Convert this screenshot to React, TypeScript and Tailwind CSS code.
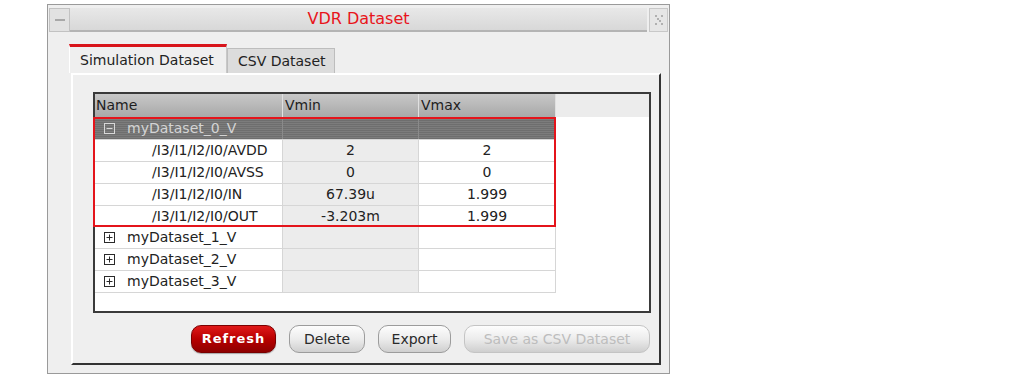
import React from 'react'

const children = [
  { name: '/I3/I1/I2/I0/AVDD', vmin: '2', vmax: '2' },
  { name: '/I3/I1/I2/I0/AVSS', vmin: '0', vmax: '0' },
  { name: '/I3/I1/I2/I0/IN', vmin: '67.39u', vmax: '1.999' },
  { name: '/I3/I1/I2/I0/OUT', vmin: '-3.203m', vmax: '1.999' },
]

const collapsed = ['myDataset_1_V', 'myDataset_2_V', 'myDataset_3_V']

// 展开/折叠小方框
function ToggleBox({ open, light }: { open: boolean; light?: boolean }) {
  const c = light ? '#d8d8d8' : '#2a2a2a'
  return (
    <svg width="11" height="11" viewBox="0 0 11 11" className="shrink-0">
      <rect x="0.5" y="0.5" width="10" height="10" fill="none" stroke={c} />
      <line x1="2.5" y1="5.5" x2="8.5" y2="5.5" stroke={c} />
      {!open && <line x1="5.5" y1="2.5" x2="5.5" y2="8.5" stroke={c} />}
    </svg>
  )
}

function Btn({ label, w, kind }: { label: string; w: string; kind?: 'red' | 'off' }) {
  if (kind === 'red') {
    return (
      <div
        className={`${w} h-[28px] rounded-[10px] border border-[#7a0000] bg-gradient-to-b from-[#e01818] via-[#b80000] to-[#8e0000] flex items-center justify-center text-white text-[13px] font-bold tracking-[1px] shadow-[0_1px_1px_rgba(0,0,0,0.3)]`}
      >
        {label}
      </div>
    )
  }
  return (
    <div
      className={`${w} h-[28px] rounded-[10px] border border-[#9c9c9c] bg-gradient-to-b from-[#fdfdfd] via-[#ececec] to-[#cfcfcf] flex items-center justify-center text-[14px] ${
        kind === 'off' ? 'text-[#bdbdbd] border-[#c4c4c4]' : 'text-[#2a2a2a]'
      }`}
    >
      {label}
    </div>
  )
}

export default function App() {
  return (
    <div
      className="w-[1013px] h-[381px] bg-white pl-[47px] pt-[4px]"
      style={{ fontFamily: '"DejaVu Sans", "Open Sans", sans-serif' }}
    >
      <div className="w-[623px] h-[370px] border border-[#9a9a9a] bg-[#efefef] p-[1px] flex flex-col">
        {/* 标题栏 */}
        <div className="flex h-[24px] mt-[2px]">
          <div className="w-[21px] border border-[#c2c2c2] bg-[#e2e2e2] flex items-center justify-center">
            <svg width="10" height="4" viewBox="0 0 10 4">
              <rect x="0" y="1" width="10" height="2" fill="#a8a8a8" />
            </svg>
          </div>
          <div className="flex-1 bg-gradient-to-b from-[#e8e8e8] to-[#d8d8d8] border-b-2 border-[#b4b4b4] flex items-center justify-center text-[#e8141b] text-[16px] leading-none">
            VDR Dataset
          </div>
          <div className="w-[19px] ml-[2px] border border-[#c8c8c8] bg-[#e6e6e6] flex items-center justify-center">
            <svg width="10" height="12" viewBox="0 0 10 12">
              <g fill="#b0b0b0">
                <rect x="1" y="1" width="2" height="2" />
                <rect x="7" y="1" width="2" height="2" />
                <rect x="3" y="4" width="2" height="2" />
                <rect x="5" y="6" width="2" height="2" />
                <rect x="1" y="9" width="2" height="2" />
                <rect x="7" y="9" width="2" height="2" />
              </g>
            </svg>
          </div>
        </div>

        <div className="pl-[20px] pt-[12px]">
          {/* 标签页 */}
          <div className="flex items-end h-[29px]">
            <div className="w-[158px] h-[29px] border-t-[3px] border-[#d8141b] border-l border-l-white border-r border-r-[#c8c8c8] bg-[#efefef] flex items-center pl-[10px] text-[14px] text-[#222]">
              Simulation Dataset
            </div>
            <div className="w-[108px] h-[25px] border border-[#bdbdbd] border-b-0 bg-[#dcdcdc] flex items-center pl-[10px] text-[14px] text-[#222]">
              CSV Dataset
            </div>
          </div>

          {/* 面板 */}
          <div className="ml-[2px] w-[590px] h-[292px] border-2 border-l-white border-t-white border-r-[#333] border-b-[#333] pl-[20px] pt-[17px]">
            <div className="w-[558px] h-[221px] border-2 border-[#3a3a3a] bg-white flex flex-col">
              {/* 表头 */}
              <div className="flex h-[23px] text-[14px] text-[#1e1e1e]">
                <div className="w-[188px] bg-gradient-to-b from-[#c8c8c8] to-[#a8a8a8] border-r border-[#e0e0e0] pl-[1px] flex items-center">
                  Name
                </div>
                <div className="w-[136px] bg-gradient-to-b from-[#c8c8c8] to-[#a8a8a8] border-r border-[#e0e0e0] pl-[2px] flex items-center">
                  Vmin
                </div>
                <div className="w-[137px] bg-gradient-to-b from-[#c8c8c8] to-[#a8a8a8] border-r border-[#e0e0e0] pl-[2px] flex items-center">
                  Vmax
                </div>
                <div className="flex-1 bg-[#ececec]" />
              </div>

              {/* 展开的数据集 */}
              <div className="relative w-[461px]">
                <div className="flex h-[22px] text-[14px] bg-[repeating-linear-gradient(180deg,#7c7c7c_0px,#7c7c7c_1px,#6e6e6e_1px,#6e6e6e_2px)]">
                  <div className="w-[188px] border-r border-[#8a8a8a] flex items-center gap-[12px] pl-[9px] text-[#d4d4d4]">
                    <ToggleBox open light />
                    myDataset_0_V
                  </div>
                  <div className="w-[136px] border-r border-[#8a8a8a]" />
                  <div className="w-[137px]" />
                </div>
                {children.map((r) => (
                  <div key={r.name} className="flex h-[22px] text-[14px] text-[#222] border-t border-[#d6d6d6]">
                    <div className="w-[188px] bg-white border-r border-[#d6d6d6] flex items-center pl-[57px] whitespace-nowrap">
                      {r.name}
                    </div>
                    <div className="w-[136px] bg-[#ececec] border-r border-[#d6d6d6] flex items-center justify-center">
                      {r.vmin}
                    </div>
                    <div className="w-[137px] bg-white border-r border-[#d6d6d6] flex items-center justify-center">
                      {r.vmax}
                    </div>
                  </div>
                ))}
                <div className="absolute -left-[2px] top-0 right-0 bottom-0 border-2 border-[#e4141b] pointer-events-none" />
              </div>

              {/* 折叠的数据集 */}
              {collapsed.map((n) => (
                <div key={n} className="flex w-[461px] h-[22px] text-[14px] text-[#222] border-b border-[#d6d6d6]">
                  <div className="w-[188px] bg-white border-r border-[#d6d6d6] flex items-center gap-[12px] pl-[9px]">
                    <ToggleBox open={false} />
                    {n}
                  </div>
                  <div className="w-[136px] bg-[#ececec] border-r border-[#d6d6d6]" />
                  <div className="w-[137px] bg-white border-r border-[#d6d6d6]" />
                </div>
              ))}
            </div>

            {/* 按钮 */}
            <div className="w-[558px] mt-[12px] flex justify-end gap-[13px] pr-[1px]">
              <Btn label="Refresh" w="w-[85px]" kind="red" />
              <Btn label="Delete" w="w-[76px]" />
              <Btn label="Export" w="w-[73px]" />
              <Btn label="Save as CSV Dataset" w="w-[186px]" kind="off" />
            </div>
          </div>
        </div>
      </div>
    </div>
  )
}
